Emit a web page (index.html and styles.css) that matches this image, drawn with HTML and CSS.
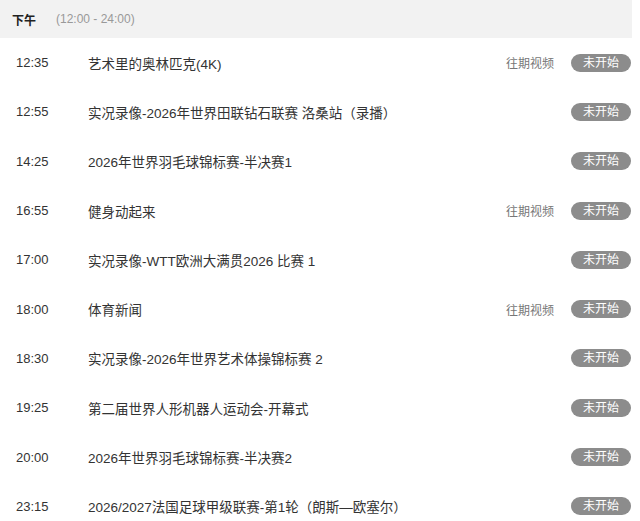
FILE: index.html
```html
<!DOCTYPE html>
<html lang="zh-CN">
<head>
<meta charset="utf-8">
<link rel="stylesheet" href="styles.css">
</head>
<body>
<div class="schedule">
  <div class="period">
    <span class="period-name">下午</span>
    <span class="period-range">(12:00 - 24:00)</span>
  </div>
  <ul class="list">
    <li class="row"><span class="time">12:35</span><span class="title">艺术里的奥林匹克(4K)</span><span class="replay">往期视频</span><span class="badge">未开始</span></li>
    <li class="row"><span class="time">12:55</span><span class="title">实况录像-2026年世界田联钻石联赛 洛桑站（录播）</span><span class="badge">未开始</span></li>
    <li class="row"><span class="time">14:25</span><span class="title">2026年世界羽毛球锦标赛-半决赛1</span><span class="badge">未开始</span></li>
    <li class="row"><span class="time">16:55</span><span class="title">健身动起来</span><span class="replay">往期视频</span><span class="badge">未开始</span></li>
    <li class="row"><span class="time">17:00</span><span class="title">实况录像-WTT欧洲大满贯2026 比赛 1</span><span class="badge">未开始</span></li>
    <li class="row"><span class="time">18:00</span><span class="title">体育新闻</span><span class="replay">往期视频</span><span class="badge">未开始</span></li>
    <li class="row"><span class="time">18:30</span><span class="title">实况录像-2026年世界艺术体操锦标赛 2</span><span class="badge">未开始</span></li>
    <li class="row"><span class="time">19:25</span><span class="title">第二届世界人形机器人运动会-开幕式</span><span class="badge">未开始</span></li>
    <li class="row"><span class="time">20:00</span><span class="title">2026年世界羽毛球锦标赛-半决赛2</span><span class="badge">未开始</span></li>
    <li class="row"><span class="time">23:15</span><span class="title">2026/2027法国足球甲级联赛-第1轮（朗斯—欧塞尔）</span><span class="badge">未开始</span></li>
  </ul>
</div>
</body>
</html>
```
FILE: styles.css
```css
html, body {
  margin: 0;
  padding: 0;
  background: #fff;
}
body {
  font-family: "Liberation Sans", "Noto Sans CJK SC", sans-serif;
  color: #333;
}
.schedule {
  width: 632px;
}
.period {
  height: 38px;
  background: #f2f2f2;
  display: flex;
  align-items: center;
  padding-left: 12px;
  font-size: 12px;
}
.period-name {
  font-weight: bold;
  color: #222;
  width: 44px;
}
.period-range {
  color: #999;
}
.list {
  list-style: none;
  margin: 0;
  padding: 0;
}
.row {
  height: 49.3px;
  display: flex;
  align-items: center;
  font-size: 13px;
  color: #333;
}
.time {
  width: 72px;
  padding-left: 16px;
  flex: none;
}
.title {
  flex: 1;
  white-space: nowrap;
  font-size: 13.5px;
}
.replay {
  font-size: 12px;
  color: #777;
  margin-right: 17px;
}
.badge {
  flex: none;
  width: 60px;
  height: 18px;
  line-height: 18px;
  border-radius: 9px;
  background: #8c8c8c;
  color: #fff;
  font-size: 12px;
  text-align: center;
  margin-right: 1px;
}
```
